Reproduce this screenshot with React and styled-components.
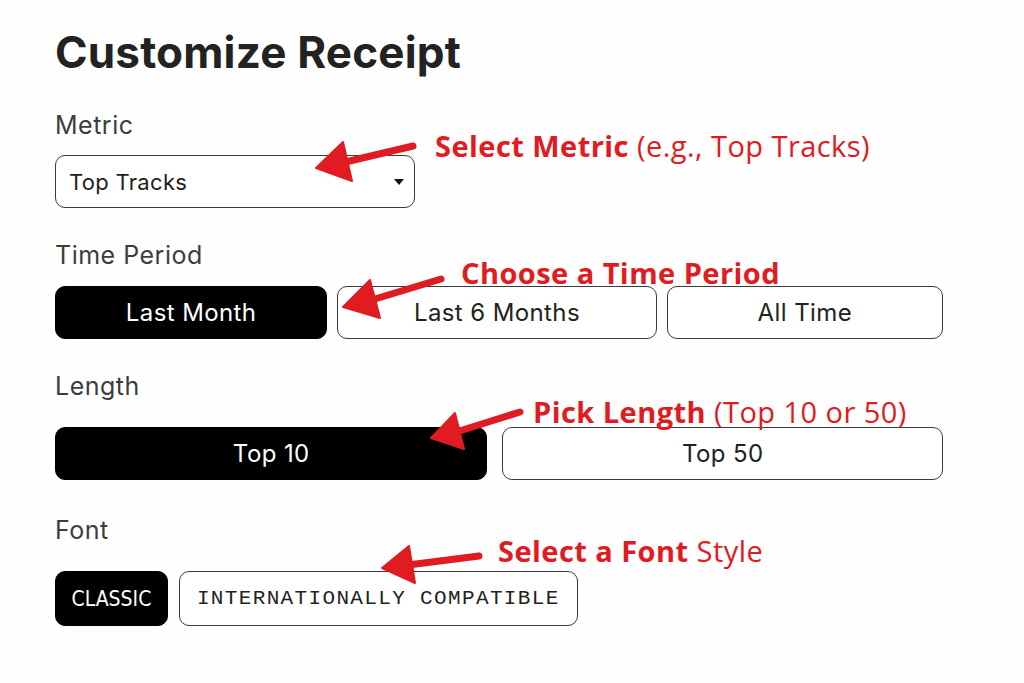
import React from "react";
import styled, { createGlobalStyle } from "styled-components";

const Global = createGlobalStyle`
  html, body { margin: 0; padding: 0; background: #ffffff; }
  * { box-sizing: border-box; }
`;

const Page = styled.div`
  position: relative;
  width: 1024px;
  height: 683px;
  overflow: hidden;
  background: #fefefe;
  padding: 30px 0 0 55px;
  font-family: Inter, "Liberation Sans", sans-serif;
  color: #222;
`;

const Panel = styled.div`
  width: 888px;
  display: flex;
  flex-direction: column;
`;

const Title = styled.h1`
  margin: 0 0 37px 0;
  font-size: 44px;
  line-height: 44px;
  font-weight: 700;
  color: #222;
  letter-spacing: 0.2px;
`;

const Field = styled.div`
  display: flex;
  flex-direction: column;
  gap: ${(p) => p.$gap}px;
  margin-bottom: ${(p) => p.$after}px;
`;

const Label = styled.div`
  font-size: 25px;
  line-height: 28px;
  color: #3d3d3d;
  font-weight: 400;
  letter-spacing: 0.5px;
`;

const SelectBox = styled.div`
  position: relative;
  width: 360px;
  height: 53px;
  border: 1.5px solid #3a3a3a;
  border-radius: 10px;
  display: flex;
  align-items: center;
  padding: 0 13px;
  font-size: 22px;
  letter-spacing: 0.3px;
  color: #1e1e1e;
  background: #fff;
`;

const Caret = styled.span`
  margin-left: auto;
  width: 0;
  height: 0;
  border-left: 5.5px solid transparent;
  border-right: 5.5px solid transparent;
  border-top: 6px solid #111;
  margin-right: -3px;
`;

const Row = styled.div`
  display: grid;
  grid-template-columns: ${(p) => p.$cols};
  gap: ${(p) => p.$gap}px;
`;

const Choice = styled.div`
  height: 53px;
  border-radius: 10px;
  border: 1.5px solid ${(p) => (p.$active ? "#000" : "#3a3a3a")};
  background: ${(p) => (p.$active ? "#000" : "#fff")};
  color: ${(p) => (p.$active ? "#fff" : "#222")};
  display: flex;
  align-items: center;
  justify-content: center;
  font-size: 24px;
  letter-spacing: 0.4px;
  font-weight: 400;
`;

const FontRow = styled.div`
  display: flex;
  gap: 11px;
`;

const FontChoice = styled.div`
  height: 55px;
  border-radius: 10px;
  border: 1.5px solid ${(p) => (p.$active ? "#000" : "#3a3a3a")};
  background: ${(p) => (p.$active ? "#000" : "#fff")};
  color: ${(p) => (p.$active ? "#fff" : "#222")};
  display: flex;
  align-items: center;
  justify-content: center;
  padding: 0 ${(p) => p.$pad}px;
  font-family: ${(p) =>
    p.$mono
      ? `"Liberation Mono", "DejaVu Sans Mono", monospace`
      : `"Liberation Sans Narrow", "DejaVu Sans Condensed", "Roboto Condensed", "Liberation Sans", sans-serif`};
  font-size: 21px;
  letter-spacing: ${(p) => (p.$mono ? 1.35 : 0)}px;
`;

const Note = styled.div`
  position: absolute;
  left: ${(p) => p.$x}px;
  top: ${(p) => p.$y}px;
  font-family: "Open Sans", Lato, sans-serif;
  font-size: 29px;
  line-height: 29px;
  color: #e01b22;
  white-space: nowrap;
  font-weight: 400;
  letter-spacing: 0.45px;
`;

const Strong = styled.span`
  font-weight: 700;
`;

const Arrows = styled.svg`
  position: absolute;
  left: 0;
  top: 0;
  pointer-events: none;
`;

const arrows = [
  { tail: [413, 146], tip: [316, 168], a: [343, 142], b: [352, 181] },
  { tail: [441, 279], tip: [343, 307], a: [370, 280], b: [380, 318] },
  { tail: [520, 412], tip: [431, 438], a: [455, 413], b: [464, 449] },
  { tail: [479, 556], tip: [382, 568], a: [409, 546], b: [415, 583] },
];

function Arrow({ tail, tip, a, b }) {
  const mid = [(a[0] + b[0]) / 2, (a[1] + b[1]) / 2];
  return (
    <g>
      <line
        x1={tail[0]}
        y1={tail[1]}
        x2={mid[0]}
        y2={mid[1]}
        stroke="#e01b22"
        strokeWidth="7"
        strokeLinecap="round"
      />
      <polygon
        points={`${tip[0]},${tip[1]} ${a[0]},${a[1]} ${b[0]},${b[1]}`}
        fill="#e01b22"
        stroke="#e01b22"
        strokeWidth="2"
        strokeLinejoin="round"
      />
    </g>
  );
}

export default function App() {
  return (
    <>
      <Global />
      <Page>
        <Panel>
          <Title>Customize Receipt</Title>

          <Field $gap={16} $after={33}>
            <Label>Metric</Label>
            <SelectBox>
              Top Tracks
              <Caret />
            </SelectBox>
          </Field>

          <Field $gap={17} $after={33}>
            <Label>Time Period</Label>
            <Row $cols="272fr 319fr 276fr" $gap={10}>
              <Choice $active>Last Month</Choice>
              <Choice>Last 6 Months</Choice>
              <Choice>All Time</Choice>
            </Row>
          </Field>

          <Field $gap={27} $after={36}>
            <Label>Length</Label>
            <Row $cols="432fr 440fr" $gap={15}>
              <Choice $active>Top 10</Choice>
              <Choice>Top 50</Choice>
            </Row>
          </Field>

          <Field $gap={27} $after={0}>
            <Label>Font</Label>
            <FontRow>
              <FontChoice $active $pad={15.5}>CLASSIC</FontChoice>
              <FontChoice $mono $pad={17}>INTERNATIONALLY COMPATIBLE</FontChoice>
            </FontRow>
          </Field>
        </Panel>

        <Note $x={435} $y={131}>
          <Strong>Select Metric</Strong> (e.g., Top Tracks)
        </Note>
        <Note $x={461} $y={258}>
          <Strong>Choose a Time Period</Strong>
        </Note>
        <Note $x={533} $y={397}>
          <Strong>Pick Length</Strong> (Top 10 or 50)
        </Note>
        <Note $x={498} $y={536}>
          <Strong>Select a Font</Strong> Style
        </Note>

        <Arrows width="1024" height="683" viewBox="0 0 1024 683">
          {arrows.map((ar, i) => (
            <Arrow key={i} {...ar} />
          ))}
        </Arrows>
      </Page>
    </>
  );
}
